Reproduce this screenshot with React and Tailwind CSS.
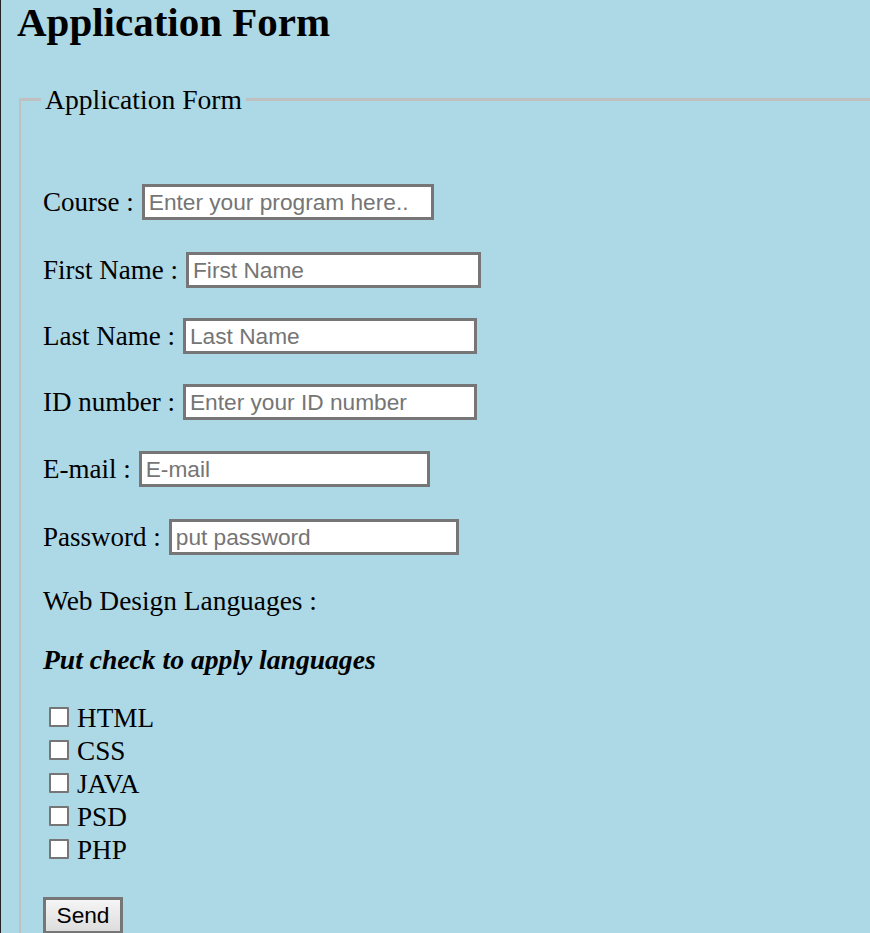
import React from 'react';

// Form rows: label text, placeholder, input width and the gap above the row
const fields = [
  { label: 'Course :', placeholder: 'Enter your program here..', width: 'w-[292px]', top: 'mt-[69px]', type: 'text' },
  { label: 'First Name :', placeholder: 'First Name', width: 'w-[295px]', top: 'mt-[32px]', type: 'text' },
  { label: 'Last Name :', placeholder: 'Last Name', width: 'w-[294px]', top: 'mt-[30px]', type: 'text' },
  { label: 'ID number :', placeholder: 'Enter your ID number', width: 'w-[294px]', top: 'mt-[30px]', type: 'text' },
  { label: 'E-mail :', placeholder: 'E-mail', width: 'w-[291px]', top: 'mt-[31px]', type: 'email' },
  { label: 'Password :', placeholder: 'put password', width: 'w-[290px]', top: 'mt-[32px]', type: 'password' },
];

const languages = ['HTML', 'CSS', 'JAVA', 'PSD', 'PHP'];

const serif = "font-['Liberation_Serif','Times_New_Roman',serif]";
const sans = "font-['Liberation_Sans',Arial,sans-serif]";

const Field = ({ label, placeholder, width, top, type }) => (
  <div className={`flex items-center h-[36px] ${top}`}>
    <label className="text-[27px] leading-[31px] whitespace-nowrap">{label}</label>
    <input
      type={type}
      placeholder={placeholder}
      className={`ml-[8px] h-[36px] ${width} shrink-0 border-[3px] border-[#767676] bg-white px-[4px] text-[22.7px] text-black placeholder:text-[#757575] outline-none font-['Liberation_Sans',Arial,sans-serif]`}
    />
  </div>
);

export default function App() {
  return (
    <div className={`min-h-screen w-full overflow-hidden bg-[#add8e6] border-l border-[#222] pl-[16px] text-black ${serif}`}>
      <h1 className="mt-[2px] text-[41px] leading-[41px] font-bold">Application Form</h1>

      <fieldset className="mt-[41px] ml-[2px] w-[900px] border-2 border-t-[3px] border-[#c0c0c0] pl-[22px] pb-[40px]">
        <legend className="px-[4px] -ml-[2px] text-[27.6px] leading-[31px]">Application Form</legend>

        {fields.map((f) => (
          <Field key={f.label} {...f} />
        ))}

        <p className="mt-[31px] text-[27.4px] leading-[31px]">Web Design Languages :</p>
        <p className="mt-[27px] text-[27.6px] leading-[31px] font-bold italic">Put check to apply languages</p>

        <div className="mt-[27px]">
          {languages.map((lang) => (
            <label key={lang} className="flex items-start h-[33px] text-[27.2px] leading-[33px]">
              <input
                type="checkbox"
                className="appearance-none mt-[5px] ml-[6px] mr-[8px] w-[20px] h-[20px] shrink-0 border-2 border-[#767676] bg-white rounded-[1px]"
              />
              {lang}
            </label>
          ))}
        </div>

        <button
          type="button"
          className={`mt-[30px] w-[80px] h-[37px] border-[3px] border-[#767676] bg-linear-to-b from-[#f5f5f5] to-[#dddddd] text-[22.7px] leading-[31px] ${sans}`}
        >
          Send
        </button>
      </fieldset>
    </div>
  );
}
